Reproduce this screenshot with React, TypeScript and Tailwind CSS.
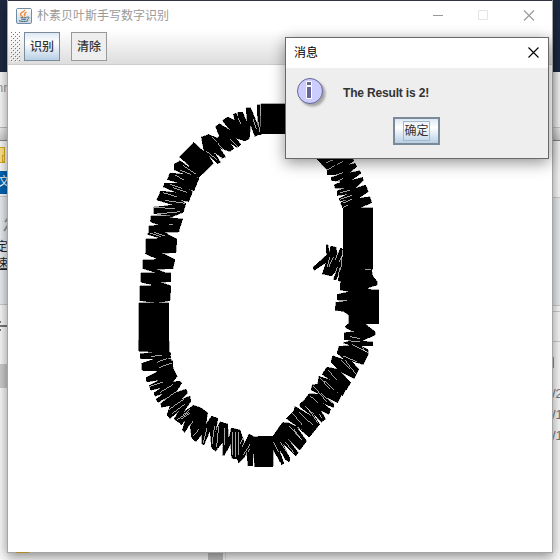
import React from "react";

const cjk = "font-['Liberation_Sans','Noto_Sans_CJK_SC',sans-serif]";

const strokes = [
  {
    at: "translate(130 95) scale(.33333)",
    shape:
      "468,27 393,27 393,95 391,95 389,30 382,30 383,90 362,38 348,38 352,85 338,52 323,52 325,68 318,54 310,58 314,75 292,66 277,77 300,105 268,86 256,95 268,122 262,130 237,118 214,126 218,148 222,170 191,142 148,186 170,205 185,222 150,197 133,207 133,225 165,238 120,234 112,254 150,265 104,264 100,276 140,293 92,288 80,315 130,330 72,336 72,356 125,362 62,362 62,380 100,388 98,392 152,392 158,372 120,368 160,352 168,325 150,315 176,320 188,290 170,280 192,288 207,250 180,235 206,248 250,206 235,180 262,206 272,202 255,175 275,190 287,186 270,160 300,170 312,160 300,145 322,158 333,148 318,130 345,138 358,132 362,90 375,125 385,120 397,118 393,116 468,116",
    slits:
      "M160 212L198 238M150 225L182 238M135 240L162 255M120 268L155 280M128 278L172 292M100 293L142 306M105 316L164 325M72 336L135 342M80 357L150 350M228 168L262 195M252 173L277 190M246 127L262 142M262 143L281 164M300 133L324 155M323 68L333 88M369 72L379 101M385 80L389 112",
  },
  {
    at: "translate(280 140) scale(.33333)",
    shape:
      "108,55 142,90 142,104 175,105 153,112 155,122 185,125 162,135 166,145 195,145 171,152 172,167 205,162 177,175 180,184 205,178 182,188 188,204 190,204 190,330 183,323 172,342 168,322 152,318 148,340 144,315 138,315 140,345 98,383 103,391 138,368 127,402 155,408 168,393 160,418 168,420 178,400 174,422 182,424 180,450 208,455 172,463 172,480 208,482 168,487 165,510 190,514 207,525 207,550 195,560 200,565 215,572 272,572 258,552 297,552 297,450 265,448 265,443 292,435 292,425 278,408 275,390 279,387 279,204 240,204 275,188 270,170 235,175 265,155 257,135 225,145 250,122 248,112 215,120 243,100 240,92 210,98 230,80 225,70 205,75 222,62 218,55",
    slits:
      "M139 68L158 60M142 90L166 76M171 74L190 64M158 108L188 98M165 128L190 115M181 159L210 150M180 178L215 166M188 190L215 178M188 202L204 196M178 327L166 360M187 346L178 365M160 351L146 382M150 350L142 380M172 382L160 414M180 385L172 418M188 330L182 390M208 558L222 568M226 552L246 565M255 390L273 390",
  },
  {
    at: "translate(130 220) scale(.33333)",
    shape:
      "60,0 65,8 90,15 57,18 57,36 90,39 57,36 51,43 92,55 48,57 48,96 45,101 84,118 39,120 39,146 78,158 33,159 33,187 75,196 30,198 30,242 74,248 27,249 27,393 78,396 30,402 32,416 77,416 36,430 36,450 128,450 129,423 100,420 124,412 118,399 85,397 117,393 117,249 83,248 120,242 123,197 91,187 123,185 123,159 106,158 80,148 129,146 135,118 96,100 138,98 141,57 103,37 147,36 153,5 140,2",
    slits:
      "M61 39L92 50M73 37L105 48M74 411L102 404M89 426L118 417M93 440L110 437M117 14L130 15",
  },
  {
    at: "translate(130 340) scale(.33333)",
    shape:
      "27,0 27,33 78,36 30,42 32,56 77,56 36,70 38,93 87,92 48,113 50,126 88,120 57,137 62,151 95,143 72,158 75,169 102,159 78,178 84,187 109,174 92,190 94,202 120,197 111,225 120,236 148,212 132,237 150,250 154,256 166,240 157,270 164,278 180,252 185,295 198,305 215,284 216,313 222,315 240,273 245,325 257,334 278,307 278,347 284,345 302,311 305,355 322,357 326,370 335,360 342,354 350,336 354,378 369,378 369,338 375,338 375,381 429,381 429,327 450,366 450,258 430,291 375,292 356,282 344,309 330,270 304,264 296,299 293,252 270,245 256,277 264,235 245,228 228,253 233,218 213,203 190,196 160,217 183,184 180,168 153,179 173,160 169,147 138,157 155,130 150,123 128,126 142,109 130,86 123,57 100,53 124,43 118,34 117,0",
    slits:
      "M63 50L96 45M80 67L110 56M87 83L125 69M57 140L98 126M90 157L130 133M93 188L145 150M116 209L163 177M126 221L165 192M140 240L178 216M154 237L180 220M174 267L189 244M189 288L207 268M231 264L220 308M254 258L246 312M266 257L260 320M284 263L282 316M307 276L307 345M318 275L318 350M326 276L326 345M350 276L330 311M357 280L336 322M341 344L366 303M354 335L370 315M160 225L180 208M260 328L279 318",
  },
  {
    at: "translate(250 310) scale(.33333)",
    shape:
      "255,0 280,4 298,14 297,40 290,45 288,54 325,63 283,68 283,89 305,91 278,99 305,106 267,109 261,130 285,150 248,137 243,157 265,178 231,171 216,193 243,211 207,199 203,222 187,225 183,240 210,253 177,251 162,271 149,282 151,291 190,322 135,289 131,303 109,326 160,362 118,339 98,337 69,378 9,380 7,376 0,375 0,466 8,468 9,420 15,470 69,470 71,407 95,465 102,460 83,407 107,450 118,456 120,443 98,400 127,427 137,438 145,428 111,383 149,421 170,393 137,347 178,382 209,343 185,304 214,337 227,327 211,300 237,313 242,298 218,279 250,293 252,282 230,263 263,278 274,257 245,234 277,258 289,237 289,241 302,218 274,187 313,206 327,178 304,153 340,164 355,132 354,119 332,107 368,107 369,96 335,93 376,75 376,65 345,42 387,41 387,0",
    slits:
      "M280 138L320 155M273 151L300 176M285 150L317 192M306 103L353 127M335 110L346 125M235 181L260 210M221 211L252 239M209 204L240 236M190 228L230 275M213 250L246 278M181 258L205 280M164 288L186 308M172 293L203 338M146 305L188 345M128 310L157 345M115 347L158 391M132 358L152 386M90 396L120 440M71 396L86 427M105 395L133 430M300 80L330 86M302 96L330 95M208 312L216 325",
  },
];

function Drawing() {
  return (
    <svg
      viewBox="8 65 544 487"
      className="block h-[487px] w-[544px] shrink-0"
      shapeRendering="crispEdges"
    >
      {strokes.map((s) => (
        <g key={s.at} transform={s.at}>
          <polygon points={s.shape} fill="#000" stroke="#000" strokeWidth="1" />
          <path d={s.slits} stroke="#fff" strokeWidth="1.9" fill="none" />
        </g>
      ))}
    </svg>
  );
}

function Cup() {
  return (
    <svg viewBox="0 0 16 16" className="h-4 w-4">
      <defs>
        <linearGradient id="tile" x2="0" y2="1">
          <stop stopColor="#fff" />
          <stop offset="1" stopColor="#c8d5df" />
        </linearGradient>
      </defs>
      <rect x=".5" y=".5" width="15" height="15" rx="1.2" fill="url(#tile)" stroke="#6f8ca3" />
      <path d="M8.7 1.8C9.7 4-.1 5.1 7 8.7M10.5 4.2C6.5 5.8 10.5 6.4 8.2 8.4" stroke="#ed8127" strokeWidth="1.2" fill="none" />
      <path d="M4.5 9.3c1.4.8 4.5.7 6 0M5.2 11c1.4.7 3.7.6 5 0M3 12.7c2 1 7.3 1 9.2-.1M10.7 9.2c3-1 3.1 1.4.4 2.2" stroke="#3e6681" strokeWidth="1" fill="none" />
    </svg>
  );
}

function LeftDesktop() {
  return (
    <div className="flex h-full w-2 flex-col bg-[#f9f9f9] text-xs whitespace-nowrap">
      <div className="h-[72px] shrink-0 bg-[#1c2a42]" />
      <div className="h-14 shrink-0 border-b border-[#bbb] pt-2 text-[13px] leading-4 text-[#999]">
        <span className="-ml-1">nr</span>
      </div>
      <div className="h-[13px] shrink-0 border-b border-[#888] bg-linear-to-b from-[#eee] to-[#ccc]" />
      <div className="h-[30px] shrink-0 pt-1.5">
        <div className="relative h-4 w-[5px] border border-l-0 border-[#d9ad28] bg-[#ffe38a]">
          <div className="absolute -right-px bottom-0 h-[7px] w-[3px] border border-[#d9ad28] bg-[#ffe38a]" />
        </div>
      </div>
      <div className="h-[23px] shrink-0 bg-[#0063b1] leading-[23px] text-white">
        <span className="-ml-0.5">文</span>
      </div>
      <div className="h-[3px] shrink-0 border-b border-[#ccc]" />
      <div className="flex h-[108px] shrink-0 flex-col border-b border-[#ccc] bg-[#e9edf1] pt-5 text-[#222]">
        <svg viewBox="0 0 8 16" className="mb-1.5 h-4 w-2 shrink-0">
          <path d="M8 1L5 5M8 8L4 14" stroke="#999" strokeWidth="2" />
        </svg>
        <div className="-ml-1 h-[17px] leading-[17px]">定</div>
        <div className="-ml-1 h-[17px] leading-[17px] underline">速</div>
      </div>
      <div className="h-[59px] shrink-0 pt-3.5">
        <svg viewBox="0 0 8 14" className="h-3.5 w-2">
          <path d="M0 7H7" stroke="#777" strokeWidth="2" />
          <path d="M0 3h1M0 11h1" stroke="#777" strokeWidth="2" />
        </svg>
      </div>
      <div className="h-6 shrink-0 bg-[#ccc]" />
    </div>
  );
}

function RightDesktop() {
  return (
    <div className="flex h-full w-2 flex-col bg-[#f9f9f9] text-[13px] leading-[21px] whitespace-nowrap text-[#687887]">
      <div className="h-[72px] shrink-0 bg-[#1c2a42]" />
      <div className="h-14 shrink-0 border-b border-[#ccc]" />
      <div className="h-[13px] shrink-0 border-b border-[#888] bg-linear-to-b from-[#eee] to-[#ccc]" />
      <div className="h-14 shrink-0" />
      <div className="h-[109px] shrink-0 border-y border-[#ccc] bg-[#e7ebef]" />
      <div className="h-[6px] shrink-0 border-b border-[#ccc]" />
      <div className="h-[30px] shrink-0 border-b border-[#ccc]" />
      <div className="h-[41px] shrink-0 pt-[15px]">
        <div className="h-[11px] w-0.5 bg-[#789bb5]" />
      </div>
      <div>/2</div>
      <div>/1</div>
      <div>/1</div>
    </div>
  );
}

function MainWindow() {
  return (
    <div className="absolute top-0 left-[7px] h-[553px] w-[546px] border border-t-0 border-[#a5a5a5] bg-white shadow-[0_3px_11px_rgba(0,0,0,.45)]">
      <div className="h-px bg-[#303443]" />
      <div className="flex h-[29px] items-center pl-2">
        <Cup />
        <span className="ml-[5px] text-xs text-[#999]">朴素贝叶斯手写数字识别</span>
        <svg viewBox="0 0 105 11" className="mr-[17px] ml-auto h-[11px] w-[105px]">
          <path d="M3 5.5h10" stroke="#999" />
          <path d="M48.5.5h9v9h-9z" fill="none" stroke="#e5e5e5" />
          <path d="M94 .5l10 10m0-10l-10 10" stroke="#999" strokeWidth="1.1" />
        </svg>
      </div>
      <div className="flex h-[35px] items-start border-b border-[#ccc] bg-linear-to-b from-white to-[#ddd] pt-0.5 pl-0.5 text-xs font-medium text-[#333]">
        <svg className="h-[30px] w-[11px]">
          <defs>
            <pattern id="grip" width="4" height="4" patternUnits="userSpaceOnUse">
              <path d="M1 0h1v1H1zM3 2h1v1H3z" fill="#777" />
              <path d="M2 1h1v1H2zM0 3h1v1H0z" fill="#fff" />
            </pattern>
          </defs>
          <rect width="10" height="30" fill="url(#grip)" shapeRendering="crispEdges" />
        </svg>
        <button className="ml-[3px] h-[29px] w-9 border border-[#7a8a99] bg-linear-to-b from-[#dde8f3] via-white via-35% to-[#b8cfe5] p-0">识别</button>
        <button className="ml-[11px] h-[29px] w-9 border border-[#999] bg-[#eee] p-0">清除</button>
      </div>
      <Drawing />
      <div className="absolute -bottom-px left-2 h-px w-[13px] bg-[#ad8d2b]" />
    </div>
  );
}

function MessageDialog() {
  return (
    <div className="absolute top-[37px] left-[285px] flex h-[122px] w-[264px] flex-col border border-[#696969] bg-[#eee] shadow-[0_4px_14px_rgba(0,0,0,.42)]">
      <div className="flex h-[30px] shrink-0 items-center justify-between bg-white px-2 text-xs">
        <span>消息</span>
        <svg viewBox="0 0 11 11" className="mr-px mb-0.5 h-[11px] w-[11px]">
          <path d="M.5 .5l10 10m0-10l-10 10" stroke="#000" strokeWidth="1.1" />
        </svg>
      </div>
      <div className="flex h-[49px] shrink-0 pt-[9px] pl-[10px]">
        <svg viewBox="0 0 32 32" className="h-8 w-8 shrink-0">
          <defs>
            <filter id="soft">
              <feGaussianBlur stdDeviation="1" />
            </filter>
          </defs>
          <circle cx="16.5" cy="16.5" r="13" fill="#888" opacity=".7" filter="url(#soft)" />
          <circle cx="14" cy="14" r="12.5" fill="#ccccff" stroke="#666699" />
          <path d="M10.5 4.5h5v4h-5zM10.5 9.5h5v12h-5z" fill="#666699" stroke="#fff" />
        </svg>
        <span className="ml-[15px] pt-2 text-xs leading-4 font-bold tracking-[-0.17px] text-[#333]">The Result is 2!</span>
      </div>
      <button className="ml-[107px] flex h-7 w-[47px] items-center justify-center border-2 border-[#7a8a99] bg-linear-to-b from-[#dde8f3] via-white via-35% to-[#b8cfe5] text-xs text-[#333]">
        <span className="flex h-5 w-[27px] items-center justify-center border border-[#a3b8cc]">确定</span>
      </button>
    </div>
  );
}

export default function App() {
  return (
    <div className={`relative flex h-[560px] w-[560px] items-stretch justify-between overflow-hidden bg-[#f5f5f5] ${cjk}`}>
      <LeftDesktop />
      <div className="ml-[200px] mr-auto flex w-[18px] self-end">
        <div className="h-2 w-[15px] bg-[#bbb]" />
        <div className="h-2 w-[3px] border-r border-[#ddd]" />
      </div>
      <RightDesktop />
      <MainWindow />
      <MessageDialog />
    </div>
  );
}
